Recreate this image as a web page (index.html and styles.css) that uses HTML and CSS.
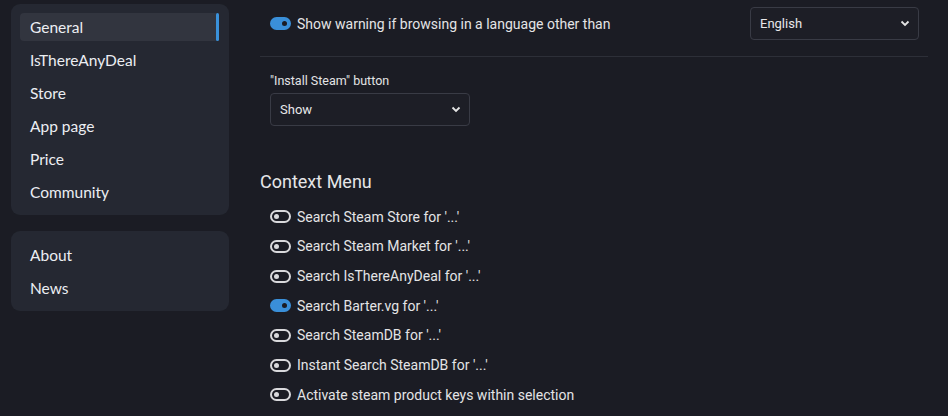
FILE: index.html
```html
<!DOCTYPE html>
<html lang="en">
<head>
<meta charset="utf-8">
<title>Options</title>
<link rel="stylesheet" href="styles.css">
</head>
<body>
<aside class="sidebar">
  <nav class="card">
    <a class="nav-item active">General</a>
    <a class="nav-item">IsThereAnyDeal</a>
    <a class="nav-item">Store</a>
    <a class="nav-item">App page</a>
    <a class="nav-item">Price</a>
    <a class="nav-item">Community</a>
  </nav>
  <nav class="card card-second">
    <a class="nav-item">About</a>
    <a class="nav-item">News</a>
  </nav>
</aside>
<main class="content">
  <div class="lang-row">
    <label class="toggle-row">
      <span class="toggle on"></span>
      <span>Show warning if browsing in a language other than</span>
    </label>
    <div class="select select-lang">
      <span>English</span>
      <svg class="chev" width="10" height="7" viewBox="0 0 10 7"><path d="M1.5 1.5 L5 5 L8.5 1.5" fill="none" stroke="#e4e4e4" stroke-width="1.8"/></svg>
    </div>
  </div>
  <div class="field">
    <div class="field-label">"Install Steam" button</div>
    <div class="select select-show">
      <span>Show</span>
      <svg class="chev" width="10" height="7" viewBox="0 0 10 7"><path d="M1.5 1.5 L5 5 L8.5 1.5" fill="none" stroke="#e4e4e4" stroke-width="1.8"/></svg>
    </div>
  </div>
  <h2 class="section-title">Context Menu</h2>
  <div class="toggle-list">
    <label class="toggle-row"><span class="toggle"></span><span>Search Steam Store for '...'</span></label>
    <label class="toggle-row"><span class="toggle"></span><span>Search Steam Market for '...'</span></label>
    <label class="toggle-row"><span class="toggle"></span><span>Search IsThereAnyDeal for '...'</span></label>
    <label class="toggle-row"><span class="toggle on"></span><span>Search Barter.vg for '...'</span></label>
    <label class="toggle-row"><span class="toggle"></span><span>Search SteamDB for '...'</span></label>
    <label class="toggle-row"><span class="toggle"></span><span>Instant Search SteamDB for '...'</span></label>
    <label class="toggle-row"><span class="toggle"></span><span>Activate steam product keys within selection</span></label>
  </div>
</main>
</body>
</html>
```

FILE: styles.css
```css
html, body {
  margin: 0;
  padding: 0;
  background: #1b1c24;
  color: #e6e6e8;
  height: 100%;
  overflow: hidden;
}
body {
  display: flex;
  align-items: flex-start;
}
.sidebar {
  width: 218px;
  margin: 4px 0 0 11px;
  display: flex;
  flex-direction: column;
  gap: 16px;
  flex: none;
}
.card {
  background: #252832;
  border-radius: 9px;
  padding: 9px 10px 9px 9px;
  display: flex;
  flex-direction: column;
  gap: 5px;
}
.card-second {
  padding-top: 10px;
}
.nav-item {
  height: 28px;
  display: flex;
  align-items: center;
  padding-left: 10px;
  font-family: Lato, "Noto Sans", sans-serif;
  font-size: 15.5px;
  color: #eceef2;
  border-radius: 4px;
  position: relative;
}
.nav-item.active {
  background: #32353f;
}
.nav-item.active::after {
  content: "";
  position: absolute;
  right: 0;
  top: 0;
  bottom: 0;
  width: 3px;
  background: #3a91da;
  border-radius: 2px;
}
.content {
  margin-left: 31px;
  width: 668px;
  flex: none;
  font-family: Roboto, "Liberation Sans", sans-serif;
  font-size: 14px;
}
.lang-row {
  display: flex;
  align-items: center;
  justify-content: space-between;
  padding: 7px 9px 16px 10px;
  border-bottom: 1px solid #2d2f38;
}
.toggle-row {
  display: flex;
  align-items: center;
  gap: 6px;
  color: #e4e4e6;
}
.toggle {
  width: 21px;
  height: 13px;
  box-sizing: border-box;
  border: 2px solid #d9d9dc;
  border-radius: 7px;
  position: relative;
  flex: none;
}
.toggle::after {
  content: "";
  position: absolute;
  left: 2px;
  top: 2px;
  width: 5px;
  height: 5px;
  border-radius: 50%;
  background: #d9d9dc;
}
.toggle.on {
  background: #3a8fd9;
  border-color: #3a8fd9;
}
.toggle.on::after {
  left: auto;
  right: 2px;
  background: #1b1c24;
}
.select {
  height: 33px;
  box-sizing: border-box;
  border: 1px solid #393b45;
  border-radius: 4px;
  background: #1d1e26;
  display: flex;
  align-items: center;
  justify-content: space-between;
  padding: 0 8px 0 9px;
  font-size: 13px;
  color: #e8e8ea;
}
.select-lang {
  width: 169px;
}
.select-show {
  width: 200px;
}
.field {
  padding: 16px 10px 0;
}
.field-label {
  font-size: 12.5px;
  line-height: 16px;
  margin-bottom: 4px;
  color: #e4e4e6;
}
.section-title {
  margin: 45px 0 0;
  font-size: 18px;
  font-weight: 400;
  line-height: 22px;
  color: #e6e6e8;
}
.toggle-list {
  padding: 9px 10px 0;
  display: flex;
  flex-direction: column;
}
.toggle-list .toggle-row {
  height: 29.67px;
}
```
